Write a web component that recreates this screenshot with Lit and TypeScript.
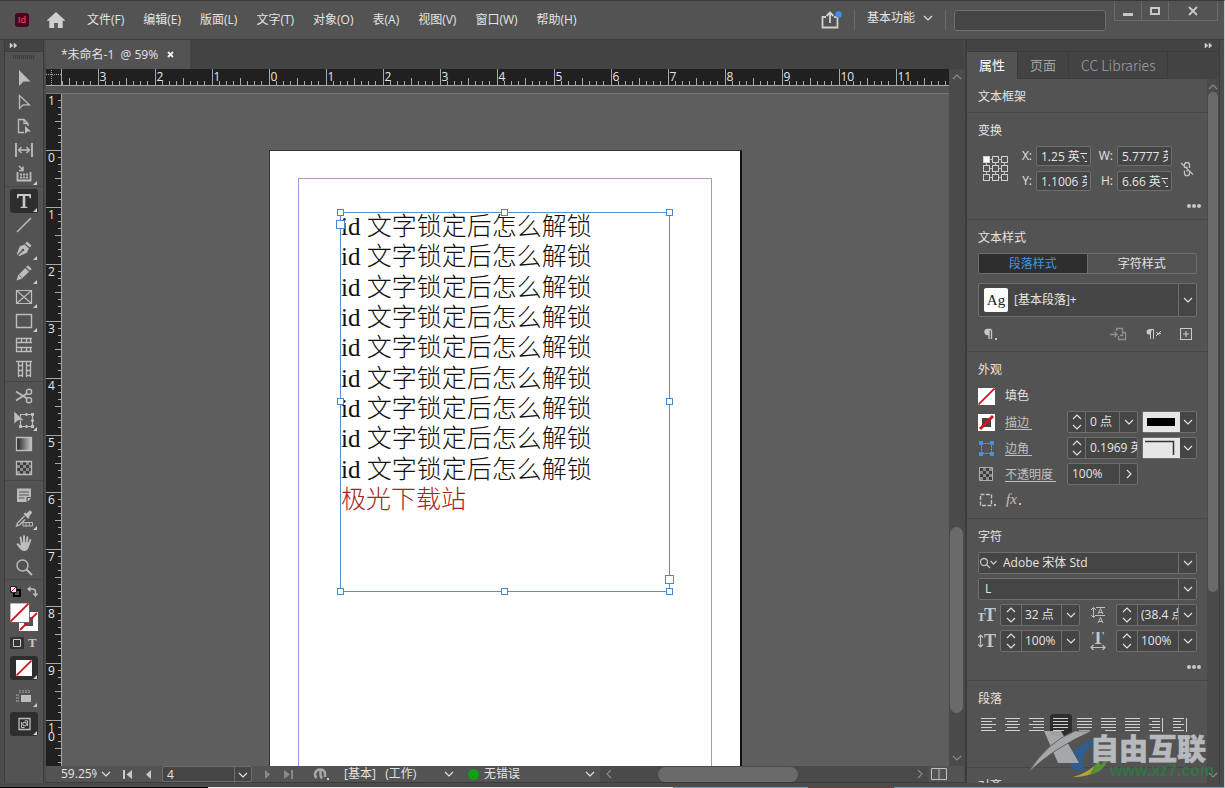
import { LitElement, html, svg, css, nothing } from "lit";
import { customElement, property } from "lit/decorators.js";

const chevron = (dir = "down") => {
  const d: Record<string, string> = {
    down: "M1 3l4 4 4-4", up: "M1 7l4-4 4 4", right: "M3 1l4 4-4 4", left: "M7 1L3 5l4 4",
  };
  return html`<svg class="chev" width="10" height="10" viewBox="0 0 10 10"><path d=${d[dir]} fill="none" stroke="currentColor" stroke-width="1.1"/></svg>`;
};

const collapse = html`<svg width="9" height="7" viewBox="0 0 9 7"><path d="M1 1v5l3-2.500zM5 1v5l3-2.500z" fill="#cfcfcf" stroke="#cfcfcf" stroke-width=".5"/></svg>`;

const G = "#bdbdbd";
const checker = (x: number, y: number, s: number, n: number, m: number) => {
  const out = [];
  for (let r = 0; r < m; r++) for (let c = 0; c < n; c++)
    out.push(svg`<rect x=${x + c * s} y=${y + r * s} width=${s} height=${s} fill=${(r + c) % 2 ? "#8c8c8c" : "#3c3c3c"} />`);
  return out;
};

type Tool = { name: string; art: unknown; more?: boolean; on?: boolean };
const tools: Tool[][] = [
  [
    { name: "选择工具", art: svg`<path d="M4 1v16l4.500-4.500h7z" fill=${G}/>` },
    { name: "直接选择工具", art: svg`<path d="M4.500 2.500v13l3.600-3.700h6.200z" fill="none" stroke=${G} stroke-width="1.300"/>` },
    { name: "页面工具", art: svg`<path d="M9 15.500H3.500v-13H9l4 4V9M9 2.500v4h4" fill="none" stroke=${G} stroke-width="1.300"/><path d="M10 9v8l2.400-2.400H16z" fill=${G}/>` },
    { name: "间隙工具", art: svg`<path d="M1 2v14M17 2v14" stroke=${G} stroke-width="1.800"/><path d="M3.500 9h11M6.500 6l-3 3 3 3M11.500 6l3 3-3 3" fill="none" stroke=${G} stroke-width="1.300"/>` },
    { name: "内容收集器工具", more: true, art: svg`<path d="M2.500 7v8.500h13V7" fill="none" stroke=${G} stroke-width="1.800"/><path d="M5 9.500h2M8 9.500h2M11 9.500h2M5 12.500h2M8 12.500h2M11 12.500h2" stroke=${G} stroke-width="1.800"/><path d="M4 1l4 4M8 1.500V5.500H4" fill="none" stroke=${G} stroke-width="1.500"/>` },
  ],
  [
    { name: "文字工具", more: true, on: true, art: svg`<path d="M2 2h14v4.200h-1.400L14 4h-3.700v10.400l2 .5V16H5.700v-1.100l2-.5V4H4l-.6 2.200H2z" fill="#c8c8c8"/>` },
    { name: "直线工具", art: svg`<path d="M2 16L16 2" stroke=${G} stroke-width="1.400"/>` },
    { name: "钢笔工具", more: true, art: svg`<path d="M12 1.500l4.500 4-1.700 2-4.500-4zM9.600 4.500l4.300 3.900-2.100 4.300-7.600 3.600-.8-.7 4.300-4.300a1.300 1.300 0 1 0-1-1l-4.300 4.500-.6-.6 2.900-7.600z" fill=${G}/>` },
    { name: "铅笔工具", more: true, art: svg`<path d="M13 1.300l3.700 3.700-1.800 1.800-3.700-3.700zM10.300 4L14 7.700l-7.300 7L1.500 16.500l1.700-5.300z" fill=${G}/><path d="M4.300 11.200l2.400 2.500" stroke="#535353" stroke-width=".8"/>` },
    { name: "矩形框架工具", more: true, art: svg`<path d="M1.500 2.500h15v13h-15zM1.500 2.500l15 13M16.500 2.500l-15 13" fill="none" stroke=${G} stroke-width="1.200"/>` },
    { name: "矩形工具", more: true, art: svg`<path d="M1.500 2.500h15v13h-15z" fill="none" stroke=${G} stroke-width="1.400"/>` },
    { name: "水平网格工具", art: svg`<path d="M1 2.500h16M1 6.500h16M1 11.500h16M1 15.500h16M1.500 2v14M6.500 2v4.500M11.500 2v4.500M15.500 2v4.500M6.500 11.500v4M11.500 11.500v4M15.500 11.500v4" fill="none" stroke=${G} stroke-width="1.300"/>` },
    { name: "垂直网格工具", art: svg`<path d="M1 1.500h16M3.500 1v16M7.500 1v16M11.500 1v16M15.500 1v16M3.500 5.500h4M3.500 10.500h4M3.500 15.500h4M11.500 5.500h4M11.500 10.500h4M11.500 15.500h4" fill="none" stroke=${G} stroke-width="1.300"/>` },
  ],
  [
    { name: "剪刀工具", art: svg`<path d="M1 4.500l11 7M1 13.500l11-7" stroke=${G} stroke-width="1.800"/><circle cx="14" cy="4.800" r="2.600" fill="none" stroke=${G} stroke-width="1.400"/><circle cx="14" cy="13.200" r="2.600" fill="none" stroke=${G} stroke-width="1.400"/>` },
    { name: "自由变换工具", more: true, art: svg`<path d="M5.500 3.500h12v12h-12z" fill="none" stroke=${G} stroke-width="1.200"/><path d="M10.500 2h2v3h-2zM16 2h3v3h-3zM4 14h3v3H4zM10.500 14h2v3h-2zM16 14h3v3h-3zM16 8.500h3v2h-3z" fill=${G}/><path d="M-1 0v13l4-3.600h6z" fill=${G} stroke="#535353" stroke-width=".6"/>` },
    { name: "渐变色板工具", art: svg`<defs><linearGradient id="tg"><stop offset="0" stop-color="#202020"/><stop offset="1" stop-color="#c8c8c8"/></linearGradient></defs><path d="M1.500 2.500h15v13h-15z" fill="url(#tg)" stroke=${G} stroke-width="1.300"/>` },
    { name: "渐变羽化工具", art: svg`${checker(2, 3, 3, 5, 4)}<path d="M1.500 2.500h15v13h-15z" fill="none" stroke=${G} stroke-width="1.300"/>` },
  ],
  [
    { name: "附注工具", art: svg`<path d="M2 2.500h14v8.500h-4.500v5H2zM12.700 12H16l-3.300 4z" fill=${G}/><path d="M4 6h10M4 9h10M4 12h5.500" stroke="#535353" stroke-width="1.200"/>` },
    { name: "颜色主题工具", more: true, art: svg`<path d="M11.500 3.500l2.200-2.200a1.800 1.800 0 0 1 2.600 0 1.800 1.800 0 0 1 0 2.600L14 6.200l.8.800-1.700 1.700-4.600-4.600 1.700-1.700z" fill=${G}/><path d="M9.500 6l-7 7L1.500 16l3-1 5.500-5.500" fill="none" stroke=${G} stroke-width="1.300"/><path d="M8 12.500h9.500v3.500H8zM11 12.500V16M14.300 12.500V16" fill="none" stroke=${G}/>` },
    { name: "抓手工具", art: svg`<path d="M6.700 9.500L5.600 3.600M9 9V2.200M11.500 9.500l.9-6.300M13.500 11l1.800-5" stroke=${G} stroke-width="2" stroke-linecap="round"/><path d="M5.500 8.500h8.800c.3 3-.8 8.500-4.700 8.500-3.500 0-4.800-2.500-7.800-6.300-.6-1 .7-2 1.600-1.300l2.600 2.200z" fill=${G}/>` },
    { name: "缩放显示工具", art: svg`<circle cx="7.500" cy="7.500" r="5.500" fill="none" stroke=${G} stroke-width="1.400"/><path d="M11.500 11.500l5.500 5.500" stroke=${G} stroke-width="2"/>` },
  ],
];

const menus = ["文件(F)", "编辑(E)", "版面(L)", "文字(T)", "对象(O)", "表(A)", "视图(V)", "窗口(W)", "帮助(H)"];
const INCH = 57;

@customElement("page-ruler")
class PageRuler extends LitElement {
  @property({ type: Boolean }) vertical = false;
  @property({ type: Number }) zero = 0;
  @property({ type: Number }) from = -4;
  @property({ type: Number }) to = 12;
  static styles = css`
    :host { display: block; overflow: hidden; background: #202020; }
    svg { display: block; }
    text { font: 12px "Open Sans", "Noto Sans", sans-serif; fill: #e6e6e6; }
    path { stroke: #a8a8a8; fill: none; }
  `;
  render() {
    let d = "";
    const labels = [];
    for (let i = this.from * 8; i < this.to * 8; i++) {
      const p = this.zero + Math.floor((i * INCH) / 8) + 0.5;
      const len = i % 8 === 0 ? 16 : i % 4 === 0 ? 7 : 4;
      d += this.vertical ? `M16 ${p}h-${len}` : `M${p} 16v-${len}`;
      if (i % 8 === 0 && p > -2) {
        const n = String(Math.abs(i / 8));
        if (this.vertical) {
          [...n].forEach((c, k) => labels.push(svg`<text x="2" y=${p + 11 + k * 9}>${c}</text>`));
        } else labels.push(svg`<text x=${p + 1} y="12">${n}</text>`);
      }
    }
    return this.vertical
      ? html`<svg width="16" height="2000"><path d=${d + "M15.500 0v2000"}/>${labels}</svg>`
      : html`<svg width="3000" height="17"><path d=${d + "M0 16.500h3000"}/>${labels}</svg>`;
  }
}

@customElement("app-root")
class AppRoot extends LitElement {
  static styles = css`
    :host { display: block; font: 12px/16px "Open Sans", "Noto Sans CJK SC", sans-serif; color: #e4e4e4; }
    * { box-sizing: border-box; }
    button, input, select { font: inherit; color: inherit; margin: 0; padding: 0; border: 0; background: none; border-radius: 0; outline: 0; min-width: 0; }
    select { appearance: none; }
    button { display: flex; align-items: center; justify-content: center; }
    svg { display: block; flex: none; }
    .window { display: flex; flex-direction: column; height: 100vh; overflow: hidden; background: #4b4b4b; border-top: 1px solid #3a3a3a; border-right: 1px solid #c8c8c8; }
    .desktop { height: 1px; margin-top: 4px; flex: none; background: linear-gradient(90deg, #000 0 17%, #e8e8e8 17% 55%, #6f9fb8 55% 66%, #6b4030 66% 73%, #6f9fb8 73%); }

    .titlebar { height: 39px; flex: none; display: flex; align-items: center; background: #535353; border-bottom: 1px solid #3c3c3c; padding: 0 6px 0 15px; }
    .logo { width: 14px; height: 14px; border-radius: 3px; background: #49021f; color: #ff3366; font-size: 9px; line-height: 13px; text-align: center; font-weight: 600; }
    .home { margin: 0 22px 0 18px; }
    .menus { display: flex; gap: 19px; flex: 1; white-space: nowrap; }
    .split { width: 1px; height: 20px; background: #6a6a6a; }
    .workspace { gap: 8px; padding: 0 12px; margin-bottom: 4px; }
    .share { margin: 0 12px; }
    .search { width: 152px; height: 21px; background: #454545; border: 1px solid #6e6e6e; border-radius: 3px; margin: 0 8px; }
    .winbtns { display: flex; align-self: flex-start; height: 20px; border: 1px solid #6a6a6a; border-top: 0; }
    .winbtns button { width: 27px; border-right: 1px solid #6a6a6a; }
    .winbtns .close { width: 48px; border-right: 0; }

    .main { flex: 1; min-height: 0; display: flex; padding: 0 4px 0 4px; }
    .toolbox { width: 40px; flex: none; background: #535353; border-left: 1px solid #3c3c3c; border-right: 1px solid #3c3c3c; display: flex; flex-direction: column; align-items: stretch; }
    .cap { height: 12px; flex: none; display: flex; align-items: center; background: #434343; padding: 0 4px; border-bottom: 1px solid #3c3c3c; }
    .cap.end { justify-content: flex-end; padding: 0 6px; }
    .grip { height: 14px; flex: none; padding: 3px 8px; }
    .grip i { display: block; height: 4px; background: repeating-linear-gradient(90deg, #3c3c3c 0 1px, #535353 1px 2px); }
    .group { padding: 0 5px; border-bottom: 1px solid #474747; margin-bottom: 2px; }
    .tool { width: 28px; height: 24px; position: relative; border-radius: 3px; }
    .tool.on { background: #2e2e2e; }
    .more::after { content: ""; position: absolute; right: 1px; bottom: 1px; border: 2px solid transparent; border-right-color: #d0d0d0; border-bottom-color: #d0d0d0; }
    .pair { display: flex; justify-content: space-between; align-items: center; padding: 0 5px; height: 18px; }
    .fillstroke { padding: 0 5px; height: 34px; }
    .low { display: flex; flex-direction: column; gap: 4px; padding: 4px 5px; }

    .doc { flex: 1; min-width: 0; display: flex; flex-direction: column; margin-left: 2px; background: #434343; }
    .tabs { height: 29px; flex: none; display: flex; }
    .tab { display: flex; align-items: center; gap: 9px; width: 144px; padding-left: 15px; background: #535353; white-space: pre; }
    .stage { flex: 1; min-height: 0; display: flex; }
    .view { flex: 1; min-width: 0; display: grid; grid-template-columns: 16px 1fr; grid-template-rows: 17px 8px 1fr; background: #535353; }
    .corner { background: #202020; }
    .gap { grid-column: 1 / 3; border-bottom: 1px solid #767676; }
    .canvas { background: #5e5e5e; position: relative; overflow: hidden; }
    .page { position: absolute; left: 207px; top: 56px; width: 473px; height: 660px; background: #fff; border: 1px solid #333; border-right: 2px solid #111; }
    .margin { position: absolute; left: 28px; top: 27px; width: 414px; height: 640px; border: 1px solid #a493dc; border-top-color: #c093c8; }
    .frame { position: absolute; left: 70px; top: 61px; width: 330px; height: 380px; border: 1px solid #5b8fce; color: #111; }
    .story { display: grid; grid-auto-rows: 1fr; height: 303px; margin-top: -1px; align-items: center; font: 300 25px/30px "Liberation Serif", "Noto Sans CJK SC", serif; white-space: nowrap; }
    .story p { margin: 0; }
    .story .red { color: #a81e22; }
    .h { position: absolute; width: 7px; height: 7px; margin: -4px; background: #fff; border: 1px solid #4a86cc; }
    .x0 { left: 0; } .x1 { left: 50%; } .x2 { left: 100%; margin-left: -3px; }
    .y0 { top: 0; } .y1 { top: 50%; } .y2 { top: 100%; margin-top: -3px; }
    .port { width: 9px; height: 9px; margin-left: -5px; }
    .in { top: 11px; } .out { top: 366px; margin-left: -4px; }

    .vbar { width: 15px; flex: none; background: #4a4a4a; display: flex; flex-direction: column; align-items: center; color: #8c8c8c; padding: 3px 0; }
    .vbar .thumb { width: 13px; background: #6a6a6a; border-radius: 7px; }
    .t1 { flex: 444 0 0; } .t2 { flex: 185 0 0; } .t3 { flex: 40 0 0; }
    .status { height: 17px; flex: none; display: flex; align-items: center; background: #535353; border-bottom: 1px solid #3c3c3c; }
    .zoom { width: 36px; margin: 0 4px 0 15px; overflow: hidden; }
    .nav { display: flex; gap: 13px; margin: 0 10px 0 12px; align-items: center; }
    .nav.next { margin: 0 19px 0 13px; opacity: .7; }
    .pageno { display: grid; grid-template-columns: 1fr 17px; width: 90px; height: 16px; border: 1px solid #6e6e6e; border-radius: 2px; background: #454545; }
    .pageno input { padding-left: 4px; }
    .pageno button { border-left: 1px solid #6e6e6e; }
    .profile { display: flex; align-items: center; justify-content: space-between; width: 110px; margin: 0 14px; white-space: pre; }
    .dot { width: 11px; height: 11px; border-radius: 50%; background: #12a012; margin-right: 5px; }
    .preflight { display: flex; justify-content: space-between; align-items: center; width: 111px; }
    .hbar { flex: 1; align-self: stretch; margin-left: 5px; background: #4a4a4a; display: flex; align-items: center; color: #8c8c8c; padding: 0 4px; }
    .hbar .thumb { height: 15px; border-radius: 8px; background: #6a6a6a; flex: 139 0 0; }
    .hbar .a { flex: 44 0 0; } .hbar .b { flex: 117 0 0; }
    .spread { margin: 0 17px 0 2px; }

    .dock { width: 255px; flex: none; display: flex; flex-direction: column; background: #535353; border-left: 2px solid #3c3c3c; border-right: 1px solid #3c3c3c; margin-left: 1px; }
    .ptabs { height: 27px; flex: none; display: flex; background: #434343; font-size: 13px; color: #a2a2a2; }
    .ptabs button { padding: 0 12px; border-right: 1px solid #3a3a3a; border-bottom: 1px solid #3a3a3a; }
    .ptabs .cc { font: 300 14px "Noto Sans CJK SC", sans-serif; }
    .ptabs .cur { background: #535353; border-bottom-color: #535353; color: #fff; }
    .pbody { flex: 1; min-height: 0; display: flex; position: relative; }
    .panels { flex: 1; min-width: 0; overflow: hidden; }
    section { padding: 8px 10px 5px 11px; border-bottom: 1px solid #474747; }
    section.tight { padding-bottom: 3px; }
    h2 { margin: 0; font: inherit; line-height: 20px; }
    .sbar { width: 12px; flex: none; display: flex; flex-direction: column; align-items: center; background: #4a4a4a; color: #8c8c8c; padding: 3px 0; }
    .sbar .thumb { width: 10px; border-radius: 5px; background: #6a6a6a; flex: 495 0 0; }
    .sbar .rest { flex: 176 0 0; }

    .field { background: #454545; border: 1px solid #6e6e6e; border-radius: 2px; }
    .xform { display: grid; grid-template-columns: 35px 15px 55px 18px 55px 22px; gap: 5px 4px; align-items: center; margin: 5px 0; }
    .xform .ref, .xform .link { grid-row: 1 / 3; justify-self: center; }
    .xform .ref { grid-column: 1; }
    .xform .link { grid-column: 6; }
    .xform label { text-align: right; }
    .xform input { height: 20px; padding: 0 3px 0 4px; width: 100%; }
    .dots { display: flex; justify-content: flex-end; margin-right: -5px; height: 20px; align-items: center; }
    .r1 { grid-row: 1; } .r2 { grid-row: 2; }
    .seg { display: grid; grid-template-columns: 1fr 1fr; height: 21px; margin-top: 5px; border: 1px solid #6e6e6e; border-radius: 2px; }
    .seg .cur { background: #2e2e2e; color: #3f94e4; border-right: 1px solid #6e6e6e; }
    .pick { display: grid; grid-template-columns: auto 1fr 18px; align-items: center; position: relative; }
    .pick select { padding-left: 6px; height: 100%; }
    .pick .arrow { border-left: 1px solid #6e6e6e; height: 100%; display: flex; align-items: center; justify-content: center; pointer-events: none; }
    .style { height: 34px; margin-top: 9px; }
    .ag { width: 24px; height: 24px; margin-left: 5px; border-radius: 2px; background: #fff; color: #222; font: 15px/24px "Liberation Serif", serif; text-align: center; }
    .icons { display: flex; align-items: center; height: 20px; margin: 7px 0 2px; gap: 18px; padding: 0 5px; }
    .grow { flex: 1; }
    .look { display: grid; grid-template-columns: 17px 53px 70px 55px; column-gap: 10px; grid-auto-rows: 26px; align-items: center; margin: 3px 0 2px; }
    .look .lk { color: #c0c0c0; text-decoration: underline; text-underline-offset: 2px; white-space: pre; padding-top: 2px; }
    .look .combo { margin-left: -1px; } .look .sw { margin-left: -6px; }
    .look .fxb { justify-self: start; }
    .combo { display: grid; grid-template-columns: 17px 1fr 18px; height: 22px; }
    .combo.wide { grid-template-columns: 20px 1fr 18px; }
    .combo.bare { grid-template-columns: 1fr 18px; }
    .combo.open { grid-template-columns: 17px 1fr; }
    .combo input { padding-left: 4px; width: 100%; }
    .combo.wide input { padding-left: 3px; }
    .combo input, .combo .dd { border-left: 1px solid #6e6e6e; }
    .combo.bare input { border-left: 0; }
    .spin { display: flex; flex-direction: column; }
    .spin button { height: 10px; }
    .sw { display: grid; grid-template-columns: 37px 1fr; height: 22px; width: 55px; }
    .chip { background: #e6e6e6; }
    .fonts { height: 22px; margin-top: 4px; }
    .h2gap { margin-bottom: 5px; }
    .metrics { display: grid; grid-template-columns: 22px 80px 1fr 81px; gap: 4px 0; align-items: center; margin: 4px 0 5px; }
    .metrics .mid { justify-self: center; }
    .aligns { display: flex; gap: 2px; margin: 5px 0 0; padding-bottom: 26px; }
    .aligns button { width: 22px; height: 22px; border-radius: 3px; }
    .aligns .cur { background: #2e2e2e; }
    .mark { position: absolute; right: -1px; bottom: 0; opacity: .85; pointer-events: none; }
    .mark svg { overflow: visible; }
    .cn { font: 900 29px "Noto Sans CJK SC", sans-serif; fill: #c8ccd0; stroke: #c8ccd0; stroke-width: .6px; }
    .url { font: bold 16px "Liberation Sans", sans-serif; fill: #2d7a45; }
    .serif { font: bold 18px "Liberation Serif", serif; fill: #c6c6c6; }
    .small { font-size: 13px; }
    .fx { font: italic 15px "Liberation Serif", serif; fill: #c0c0c0; }
  `;

  spin(name: string) {
    return html`<div class="spin"><button aria-label="${name}增加">${chevron("up")}</button><button aria-label="${name}减少">${chevron()}</button></div>`;
  }
  combo(name: string, value: string, kind = "", drop = true) {
    return html`<div class="field combo ${kind}">${kind === "bare" ? nothing : this.spin(name)}<input aria-label=${name} .value=${value}>${drop ? html`<button class="dd" aria-label="${name}选项">${chevron(kind === "bare" ? "right" : "down")}</button>` : nothing}</div>`;
  }
  dots() {
    return html`<div class="dots"><button aria-label="更多选项"><svg width="16" height="6"><g fill="#c8c8c8"><circle cx="3" cy="3" r="2"/><circle cx="8" cy="3" r="2"/><circle cx="13" cy="3" r="2"/></g></svg></button></div>`;
  }
  none(size: number) {
    return html`<svg width=${size} height=${size} viewBox="0 0 16 16"><path d="M0 0h16v16H0z" fill="#fff"/><path d="M.5 15.500l15-15" stroke="#d4141c" stroke-width="1.700"/></svg>`;
  }
  aligns() {
    const rows = [0, 3, 6, 9, 12];
    const kinds = ["l", "c", "r", "jl", "jc", "jr", "j", "sp", "sa"];
    return kinds.map((k) => html`<button class=${k === "jl" ? "cur" : ""} aria-label="对齐 ${k}"><svg width="16" height="14" viewBox="0 0 16 14">${rows.map((y, i) => {
      let w = 15, x = 0;
      const short = i % 2 === 1;
      if (k === "l" && short) w = 11;
      if (k === "c" && short) { w = 11; x = 2; }
      if (k === "r" && short) { w = 11; x = 4; }
      if (k === "jl" && i === 4) w = 11;
      if (k === "jc" && i === 4) { w = 11; x = 2; }
      if (k === "jr" && i === 4) { w = 11; x = 4; }
      if (k === "sp") { w = short ? 8 : 11; x = short ? 3 : 0; }
      if (k === "sa") w = short ? 8 : 11;
      return svg`<rect x=${x} y=${y} width=${w} height="1" fill="#d0d0d0"/>`;
    })}${k[0] === "s" ? svg`<rect x="13" y="0" width="1" height="14" fill="#d0d0d0"/>` : nothing}</svg></button>`);
  }

  titlebar() {
    return html`<header class="titlebar">
      <div class="logo">Id</div>
      <button class="home" aria-label="主页"><svg width="18" height="16" viewBox="0 0 18 16"><path d="M9 0l9 8.300-1 1-1.300-1V16h-4.900v-5H7.200v5H2.300V8.300L1 9.300l-1-1z" fill="#d0d0d0"/></svg></button>
      <nav class="menus">${menus.map((m) => html`<button>${m}</button>`)}</nav>
      <button class="share" aria-label="共享"><svg width="21" height="18" viewBox="0 0 21 18"><path d="M5 6H1.500v10.500h15V6H13M9 12V2M5.500 5L9 1.500 12.500 5" fill="none" stroke="#d0d0d0" stroke-width="1.800"/><circle cx="17.500" cy="3.500" r="3.200" fill="#3f8fe8"/></svg></button>
      <div class="split"></div>
      <button class="workspace">基本功能 ${chevron()}</button>
      <div class="split"></div>
      <input class="search" aria-label="搜索">
      <div class="winbtns">
        <button aria-label="最小化"><svg width="10" height="12"><path d="M0 8h10v3H0z" fill="#c8c8c8"/></svg></button>
        <button aria-label="最大化"><svg width="10" height="8"><path d="M1 1h8v6H1z" fill="none" stroke="#c8c8c8" stroke-width="2"/></svg></button>
        <button class="close" aria-label="关闭"><svg width="10" height="10"><path d="M1 1l8 8M9 1L1 9" stroke="#c8c8c8" stroke-width="1.800"/></svg></button>
      </div>
    </header>`;
  }

  toolbox() {
    return html`<aside class="toolbox">
      <div class="cap">${collapse}</div>
      <div class="grip"><i></i></div>
      ${tools.map((g) => html`<div class="group">${g.map((t) => html`<button class="tool ${t.more ? "more" : ""} ${t.on ? "on" : ""}" aria-label=${t.name}><svg width="18" height="18" viewBox="0 0 18 18" overflow="visible">${t.art}</svg></button>`)}</div>`)}
      <div class="pair">
        <button aria-label="默认填色和描边"><svg width="11" height="11" viewBox="0 0 11 11"><path d="M5 4h5v6H4V6" fill="none" stroke="#000" stroke-width="2"/><path d="M.5.500h6v6h-6z" fill="#eee" stroke="#222"/><path d="M1 6l5-5" stroke="#d4141c"/></svg></button>
        <button aria-label="互换填色和描边"><svg width="11" height="11" viewBox="0 0 11 11"><path d="M2 3h3.500q3 0 3 3v3" fill="none" stroke=${G} stroke-width="1.500"/><path d="M3.500 0v6L0 3zM5.500 7.500h6l-3 3.500z" fill=${G}/></svg></button>
      </div>
      <button class="fillstroke" aria-label="填色和描边"><svg width="28" height="28" viewBox="0 0 28 28"><path d="M9 9h19v19H9z" fill="#fff"/><path d="M14 14h9v9h-9z" fill="#535353"/><path d="M10 27L27 10" stroke="#d4141c" stroke-width="1.800"/><path d="M0 0h19.500v19.500H0z" fill="#fff" stroke="#535353" stroke-width=".8"/><path d="M.5 18.500l18-18" stroke="#d4141c" stroke-width="1.800"/></svg></button>
      <div class="pair">
        <button aria-label="格式针对容器"><svg width="14" height="12"><path d="M0 0h14v12H0z" fill="#333"/><path d="M3.500 2.500h7v7h-7z" fill="none" stroke="#ccc"/></svg></button>
        <button aria-label="格式针对文本"><svg width="12" height="12"><text class="serif small" x="2" y="10">T</text></svg></button>
      </div>
      <div class="low">
        <button class="tool on more" aria-label="应用无">${this.none(16)}</button>
        <button class="tool more" aria-label="视图选项"><svg width="18" height="18" viewBox="0 0 18 18"><path d="M6 8h10v7H6z" fill=${G}/><path d="M5 3v3M8 3v3M11 3v3M14 3v3M1 8h3M1 11h3M1 14h3" stroke=${G} stroke-dasharray="1.500 .5"/></svg></button>
        <button class="tool on more" aria-label="屏幕模式"><svg width="18" height="18" viewBox="0 0 18 18"><path d="M4 3.500h11v11H4z" fill="none" stroke=${G} stroke-width="1.300"/><path d="M6.500 7v5.500h3M12.500 11V5.800h-3M8 7.500h3.200v3.200H8z" fill="none" stroke=${G}/></svg></button>
      </div>
    </aside>`;
  }

  doc() {
    const hs = ["x0 y0", "x1 y0", "x2 y0", "x0 y1", "x2 y1", "x0 y2", "x1 y2", "x2 y2"];
    return html`<main class="doc">
      <div class="tabs"><div class="tab">*未命名-1  @ 59%<button aria-label="关闭文档"><svg width="7" height="7"><path d="M1 1l5 5M6 1L1 6" stroke="#f0f0f0" stroke-width="1.800"/></svg></button></div></div>
      <div class="stage">
        <div class="view">
          <div class="corner"><svg width="16" height="17"><path d="M5.500 1v16M0 5.500h16" stroke="#aaa" stroke-dasharray="1 1"/><path d="M15.500 0v17M0 16.500h16" stroke="#a8a8a8"/></svg></div>
          <page-ruler .zero=${207}></page-ruler>
          <div class="gap"></div>
          <page-ruler vertical .zero=${56} .from=${-1} .to=${11}></page-ruler>
          <div class="canvas"><div class="page"><div class="margin"></div><div class="frame">
            <div class="story">${Array.from({ length: 9 }, () => html`<p>id 文字锁定后怎么解锁</p>`)}<p class="red">极光下载站</p></div>
            ${hs.map((c) => html`<i class="h ${c}"></i>`)}<i class="h port x0 in"></i><i class="h port x2 out"></i>
          </div></div></div>
        </div>
        <div class="vbar">${chevron("up")}<div class="t1"></div><div class="thumb t2"></div><div class="t3"></div>${chevron()}</div>
      </div>
      <footer class="status">
        <input class="zoom" aria-label="缩放级别" .value=${"59.25%"}><button aria-label="缩放选项">${chevron()}</button>
        <div class="nav"><button aria-label="第一页"><svg width="10" height="9"><path d="M1 0v9" stroke="#c8c8c8" stroke-width="2"/><path d="M9 0v9L3.500 4.500z" fill="#c8c8c8"/></svg></button><button aria-label="上一页"><svg width="6" height="9"><path d="M5 0v9L0 4.500z" fill="#c8c8c8"/></svg></button></div>
        <div class="pageno"><input aria-label="页码" .value=${"4"}><button aria-label="选择页面">${chevron()}</button></div>
        <div class="nav next"><button aria-label="下一页"><svg width="6" height="9"><path d="M0 0v9l5-4.500z" fill="#a0a0a0"/></svg></button><button aria-label="最后一页"><svg width="10" height="9"><path d="M8 0v9" stroke="#a0a0a0" stroke-width="2"/><path d="M0 0v9l6-4.500z" fill="#a0a0a0"/></svg></button></div>
        <button aria-label="打开"><svg width="17" height="14" viewBox="0 0 17 14"><path d="M3.500 11A5 5 0 0 1 7 2.500Q12 2.500 12 7v3M7.500 3.500v4q0 3 2 3.500" fill="none" stroke="#a8a8a8" stroke-width="2.500"/><path d="M14 11h2v2h-2z" fill="#ccc"/></svg></button>
        <button class="profile">[基本]   (工作)${chevron()}</button>
        <div class="dot"></div><button class="preflight">无错误${chevron()}</button>
        <div class="hbar">${chevron("left")}<div class="a"></div><div class="thumb"></div><div class="b"></div>${chevron("right")}</div>
        <button class="spread" aria-label="拆分版面视图"><svg width="16" height="12"><path d="M.5.500h15v11H.5zM8 0v12" fill="none" stroke="#c0c0c0"/></svg></button>
      </footer>
    </main>`;
  }

  dock() {
    const cells = [0, 9, 18];
    return html`<aside class="dock">
      <div class="cap end">${collapse}</div>
      <div class="ptabs"><button class="cur">属性</button><button>页面</button><button class="cc">CC Libraries</button></div>
      <div class="pbody"><div class="panels">
        <section><h2>文本框架</h2></section>
        <section class="tight"><h2>变换</h2>
          <div class="xform">
            <svg class="ref" width="26" height="26"><path d="M3.500 3.500h18v18h-18zM12.500 3.500v18M3.500 12.500h18" fill="none" stroke="#c0c0c0"/>${cells.map((y) => cells.map((x) => svg`<rect x=${x + 0.5} y=${y + 0.5} width="6" height="6" fill=${x + y ? "#535353" : "#fff"} stroke="#d0d0d0"/>`))}</svg>
            <label for="x" class="r1">X:</label><input id="x" class="field r1" .value=${"1.25 英寸"}>
            <label for="w" class="r1">W:</label><input id="w" class="field r1" .value=${"5.7777 英寸"}>
            <label for="y" class="r2">Y:</label><input id="y" class="field r2" .value=${"1.1006 英寸"}>
            <label for="h" class="r2">H:</label><input id="h" class="field r2" .value=${"6.66 英寸"}>
            <button class="link" aria-label="约束比例"><svg width="14" height="16" viewBox="0 0 14 16"><path d="M4.500 7V4a2.500 2.500 0 0 1 5 0v3M4.500 9.500v2.700a2.500 2.500 0 0 0 5 0V9.500M7 5.500v5M1 2l12 11.500" fill="none" stroke="#c0c0c0" stroke-width="1.300"/></svg></button>
          </div>
          ${this.dots()}
        </section>
        <section><h2>文本样式</h2>
          <div class="seg"><button class="cur">段落样式</button><button>字符样式</button></div>
          <div class="field pick style"><div class="ag">Ag</div><select aria-label="段落样式"><option>[基本段落]+</option></select><span class="arrow">${chevron()}</span></div>
          <div class="icons">
            <button aria-label="段落选项"><svg width="16" height="13"><path d="M8 1.500H4.500a2.500 2.500 0 0 0 0 5H6V2v9M8.500 1.500V11" fill="none" stroke="#c8c8c8" stroke-width="1.300"/><path d="M4.500 1.500H6v5H4.500a2.500 2.500 0 0 1 0-5z" fill="#c8c8c8"/><path d="M12 10h2v2h-2z" fill="#c8c8c8"/></svg></button>
            <span class="grow"></span>
            <button aria-label="重新定义样式"><svg width="17" height="14"><path d="M0 7.500h7M4.500 5l2.500 2.500L4.500 10M6.500 4V1.500h6v7H10M12.500 5.500h3v7h-7V9" fill="none" stroke="#8e8e8e" stroke-width="1.300"/></svg></button>
            <button aria-label="清除优先选项"><svg width="17" height="12"><path d="M7 1.500H4a2.500 2.500 0 0 0 0 5h1.500z" fill="#c8c8c8"/><path d="M5.500 1v10M8.500 1v10M3.500 1.500H9M11 8l5-5M11 4l3.500 3M12 5.500h4" fill="none" stroke="#c8c8c8"/></svg></button>
            <button aria-label="新建样式"><svg width="12" height="12"><path d="M.5.500h11v11H.5zM6 3v6M3 6h6" fill="none" stroke="#c8c8c8" stroke-width="1.200"/></svg></button>
          </div>
        </section>
        <section class="tight"><h2>外观</h2>
          <div class="look">
            ${this.none(17)}<span>填色</span><span></span><span></span>
            <svg width="17" height="17"><path d="M0 0h17v17H0z" fill="#fff"/><path d="M4 4h9v9H4z" fill="#444"/><path d="M2 15L15 2" stroke="#d4141c" stroke-width="3"/></svg><a href="#stroke" class="lk">描边 </a>${this.combo("描边", "0 点")}
            <div class="field sw"><span class="chip"><svg width="36" height="20"><path d="M4 6h28v8H4z"/></svg></span><button aria-label="描边类型">${chevron()}</button></div>
            <svg width="17" height="17"><path d="M3.500 3.500h10v10h-10z" fill="none" stroke="#999" stroke-dasharray="2 1"/><path d="M1 1h4v4H1zM12 1h4v4h-4zM1 12h4v4H1zM12 12h4v4h-4z" fill="#3f94e4"/></svg><a href="#corner" class="lk">边角 </a>${this.combo("边角", "0.1969 英寸", "open", false)}
            <div class="field sw"><span class="chip"><svg width="36" height="20"><path d="M2 3.500h28.500V17" fill="none" stroke="#333" stroke-width="1.500"/></svg></span><button aria-label="边角形状">${chevron()}</button></div>
            <svg width="17" height="17">${checker(2, 2, 3, 4, 4)}<path d="M1.500 1.500h13v13h-13z" fill="none" stroke="#b0b0b0"/></svg><a href="#opacity" class="lk">不透明度 </a>${this.combo("不透明度", "100%", "bare")}<span></span>
            <button aria-label="边框选项"><svg width="19" height="14"><path d="M3.500 1.500h11v11h-11z" fill="none" stroke="#c0c0c0" stroke-width="1.400" stroke-dasharray="4 1.500"/><path d="M17 11h2v2h-2z" fill="#c0c0c0"/></svg></button><button class="fxb" aria-label="效果"><svg width="18" height="16"><text class="fx" x="1" y="12">fx</text><path d="M14 11h2v2h-2z" fill="#c0c0c0"/></svg></button>
          </div>
        </section>
        <section class="tight"><h2 class="h2gap">字符</h2>
          <div class="field pick fonts"><svg width="18" height="12"><circle cx="5" cy="5" r="3.500" fill="none" stroke="#c0c0c0" stroke-width="1.300"/><path d="M7.500 7.500L11 11M11.500 4l3 3 3-3" fill="none" stroke="#c0c0c0" stroke-width="1.300"/></svg><select aria-label="字体"><option>Adobe 宋体 Std</option></select><span class="arrow">${chevron()}</span></div>
          <div class="field pick fonts"><span></span><select aria-label="字体样式"><option>L</option></select><span class="arrow">${chevron()}</span></div>
          <div class="metrics">
            <svg width="18" height="18"><text class="serif small" x="-1" y="15">T</text><text class="serif" x="6" y="15">T</text></svg>${this.combo("字体大小", "32 点", "wide")}
            <svg class="mid" width="16" height="18"><path d="M3.500 2v9M1 4l2.500-2.500L6 4M1 9l2.500 2.500L6 9M6 1.500h9M6 9.500h9M8 8l2.500-5.500L13 8M9 6.500h3M8 17l2.500-5.500L13 17M9 15.500h3" fill="none" stroke="#c0c0c0"/></svg>${this.combo("行距", "(38.4 点)", "wide")}
            <svg width="18" height="18"><path d="M2.500 3v12M0 5.500L2.500 3 5 5.500M0 12.500L2.500 15 5 12.500" fill="none" stroke="#c0c0c0" stroke-width="1.200"/><text class="serif" x="6" y="15">T</text></svg>${this.combo("垂直缩放", "100%", "wide")}
            <svg class="mid" width="16" height="18"><text class="serif" x="2" y="12">T</text><path d="M1 15.500h14M3.500 13L1 15.500 3.500 18M12.500 13l2.500 2.500-2.500 2.500" fill="none" stroke="#c0c0c0" stroke-width="1.200"/></svg>${this.combo("水平缩放", "100%", "wide")}
          </div>
          ${this.dots()}
        </section>
        <section><h2>段落</h2><div class="aligns">${this.aligns()}</div></section>
        <section><h2>对齐</h2></section>
      </div>
      <div class="sbar">${chevron("up")}<div class="thumb"></div><div class="rest"></div>${chevron()}</div>
      <div class="mark"><svg width="195" height="55" viewBox="0 0 195 55">
        <path d="M46 40C42 22 58 12 78 11 62 17 54 30 60 42q-8 3-14-2z" fill="#2a5f96"/><path d="M48 49q18-4 25-16l3 4q4-3 6-13 4 24-34 25z" fill="#5c9a34"/><path d="M48 49q14-4 21-11l-4 8q-6 3-17 3z" fill="#c8b030"/>
        <path d="M19 3h17l18 32H33z" fill="#b4b6b8"/><path d="M3 45Q22 14 50 3h17Q28 20 3 45z" fill="#b4b6b8" stroke="#535353" stroke-width=".8"/>
        <text class="cn" x="65" y="32">自由互联</text><text class="url" x="85" y="48">www.xz7.com</text></svg></div>
      </div>
    </aside>`;
  }

  render() {
    return html`<div class="window">${this.titlebar()}<div class="main">${this.toolbox()}${this.doc()}${this.dock()}</div><div class="desktop"></div></div>`;
  }
}
